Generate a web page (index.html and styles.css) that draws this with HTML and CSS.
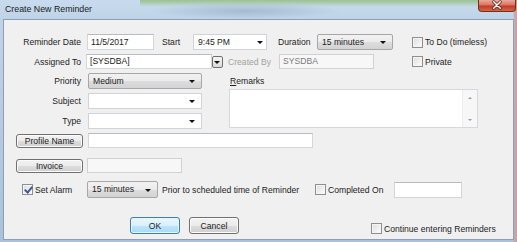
FILE: index.html
```html
<!DOCTYPE html>
<html lang="en">
<head>
    <meta charset="UTF-8">
    <title>Create New Reminder</title>
    <link rel="stylesheet" href="styles.css">
</head>
<body>
    <div class="window">
        <div class="titlebar">
            <span class="title">Create New Reminder</span>
            <span class="close">
                <svg width="38" height="12" viewBox="0 0 38 12">
                    <path d="M15.5 2.5 L22.5 9.5 M22.5 2.5 L15.5 9.5" stroke="#5a1c14" stroke-width="3" stroke-linecap="round"/>
                    <path d="M15.5 2.5 L22.5 9.5 M22.5 2.5 L15.5 9.5" stroke="#ffffff" stroke-width="1.6" stroke-linecap="round"/>
                </svg>
            </span>
        </div>

        <div class="client">
            <!-- date / start / duration -->
            <div class="row r1">
                <span class="lbl">Reminder Date</span>
                <span class="field date">11/5/2017</span>
                <span class="cap start">Start</span>
                <span class="combo plain time">9:45 PM<i class="arrow"></i></span>
                <span class="cap duration">Duration</span>
                <span class="combo dur">15 minutes<i class="arrow"></i></span>
                <span class="check todo"><i class="box"></i>To Do (timeless)</span>
            </div>

            <!-- assigned / created by -->
            <div class="row r2">
                <span class="lbl">Assigned To</span>
                <span class="field assigned">[SYSDBA]</span>
                <span class="dd-btn"><i class="arrow"></i></span>
                <span class="cap created">Created By</span>
                <span class="field off sysdba">SYSDBA</span>
                <span class="check private"><i class="box"></i>Private</span>
            </div>

            <div class="block">
                <div class="left-col">
                    <div class="row r-sel">
                        <span class="lbl">Priority</span>
                        <span class="combo sel">Medium<i class="arrow"></i></span>
                    </div>
                    <div class="row r-sel">
                        <span class="lbl">Subject</span>
                        <span class="combo plain sel"><i class="arrow"></i></span>
                    </div>
                    <div class="row r-sel">
                        <span class="lbl">Type</span>
                        <span class="combo plain sel"><i class="arrow"></i></span>
                    </div>
                </div>
                <div class="right-col">
                    <span class="remarks-lbl"><u>R</u>emarks</span>
                    <div class="memo">
                        <div class="scroll">
                            <i class="up"></i>
                            <i class="down"></i>
                        </div>
                    </div>
                </div>
            </div>

            <div class="row r6">
                <span class="btn side">Profile Name</span>
                <span class="field profile"></span>
            </div>

            <div class="row r7">
                <span class="btn side">Invoice</span>
                <span class="field off invoice"></span>
            </div>

            <div class="row r8">
                <span class="check alarm"><i class="box on"></i>Set Alarm</span>
                <span class="combo alarm-sel">15 minutes<i class="arrow"></i></span>
                <span class="cap prior">Prior to scheduled time of Reminder</span>
                <span class="check completed"><i class="box"></i>Completed On</span>
                <span class="field done"></span>
            </div>

            <div class="row r9">
                <span class="btn ok">OK</span>
                <span class="btn cancel">Cancel</span>
                <span class="check again"><i class="box"></i>Continue entering Reminders</span>
            </div>
        </div>
    </div>
</body>
</html>
```

FILE: styles.css
```css
* {
    box-sizing: border-box;
}

body {
    margin: 0;
    width: 517px;
    height: 242px;
    overflow: hidden;
    font-family: 'Liberation Sans', Arial, sans-serif;
    font-size: 8.6px;
    color: #1c1c1c;
}

.window {
    width: 517px;
    height: 242px;
    display: flex;
    flex-direction: column;
    background:
        radial-gradient(ellipse 95px 8px at 245px 11px, rgba(110, 135, 160, 0.35), rgba(110, 135, 160, 0) 100%),
        linear-gradient(180deg, rgba(140, 185, 110, 0.75) 0, rgba(140, 185, 110, 0) 7px) 140px 0 / 377px 20px no-repeat,
        linear-gradient(90deg, rgba(0, 0, 0, 0) 513px, #c7a3a6 515px),
        linear-gradient(180deg, #c8dbee 0, #bfd3e8 20px, #a9c2dc 100%);
}

.titlebar {
    height: 19px;
    display: flex;
    align-items: flex-start;
}

.title {
    margin: 3px 0 0 5px;
    font-size: 8.8px;
    line-height: 12px;
    color: #1a1a1a;
}

.close {
    margin-left: auto;
    margin-right: 1px;
    width: 38px;
    height: 12px;
    border: 1px solid #7b2c20;
    border-top: none;
    border-radius: 0 0 4px 4px;
    background: linear-gradient(180deg, #eaa99d 0%, #d9745f 45%, #c23c22 55%, #d2674a 100%);
    display: flex;
    justify-content: center;
}

.close svg {
    margin-top: -1px;
}

.client {
    margin-left: 3px;
    width: 511px;
    height: 221px;
    border: 1px solid #8c9fb3;
    background: #f0f0f0;
    padding-top: 14px;
}

.row {
    display: flex;
    align-items: center;
}

.lbl {
    width: 77px;
    flex: none;
    text-align: right;
}

.cap {
    flex: none;
    white-space: nowrap;
}

/* text boxes */
.field {
    flex: none;
    height: 16px;
    line-height: 14px;
    padding-left: 3px;
    background: #fff;
    border: 1px solid #d4d6d9;
    border-top-color: #b8bbc0;
}

.field.off {
    color: #7b7b7b;
    background: #f7f7f7;
    border-color: #cfd1d4;
}

/* combo boxes */
.combo {
    flex: none;
    position: relative;
    height: 16px;
    line-height: 14px;
    padding-left: 4px;
    border: 1px solid #a7a7a7;
    border-radius: 2px;
    background: linear-gradient(180deg, #f2f2f2 0%, #ebebeb 50%, #dddddd 51%, #d3d3d3 100%);
}

.combo.plain {
    background: #fff;
    border-color: #d0d3d7;
    border-radius: 0;
}

.arrow {
    position: absolute;
    right: 6px;
    top: 6px;
    width: 0;
    height: 0;
    border-left: 3px solid transparent;
    border-right: 3px solid transparent;
    border-top: 3px solid #111;
}

/* row 1 */
.r1 {
    height: 16px;
}

.date {
    margin-left: 6px;
    width: 67px;
}

.start {
    margin-left: 8px;
    width: 31px;
}

.time {
    width: 74px;
}

.time .arrow {
    right: 3px;
}

.duration {
    margin-left: 11px;
    width: 39px;
}

.dur {
    width: 76px;
}

/* check boxes */
.check {
    flex: none;
    display: flex;
    align-items: center;
    white-space: nowrap;
}

.box {
    width: 11px;
    height: 11px;
    margin-right: 2px;
    border: 1px solid #8e8f8f;
    background: linear-gradient(135deg, #dcdcdc 0%, #f4f4f4 70%, #ffffff 100%);
    box-shadow: inset 0 0 0 1px #f4f4f4;
    position: relative;
}

.box.on::after {
    content: "";
    position: absolute;
    left: 3px;
    top: 0;
    width: 3px;
    height: 6px;
    border-right: 2px solid #3d5a98;
    border-bottom: 2px solid #3d5a98;
    transform: rotate(40deg);
}

.todo {
    margin-left: 19px;
}

/* row 2 */
.r2 {
    height: 15px;
    margin-top: 4px;
}

.assigned {
    margin-left: 5px;
    width: 126px;
    height: 15px;
    line-height: 13px;
}

.dd-btn {
    flex: none;
    position: relative;
    width: 11px;
    height: 12px;
    border: 1px solid #6f6f6f;
    border-radius: 2px;
    background: linear-gradient(180deg, #f6f6f6, #dadada);
}

.dd-btn .arrow {
    right: 2px;
    top: 4px;
}

.created {
    margin-left: 5px;
    width: 51px;
    color: #a2a2a2;
}

.sysdba {
    width: 95px;
    height: 15px;
    line-height: 13px;
    background: #fff;
}

.private {
    margin-left: 38px;
}

/* priority / subject / type + remarks */
.block {
    display: flex;
    margin-top: 4px;
}

.left-col {
    display: flex;
    flex-direction: column;
    gap: 4px;
}

.r-sel {
    height: 16px;
}

.sel {
    margin-left: 7px;
    width: 114px;
}

.right-col {
    margin-left: 27px;
    display: flex;
    flex-direction: column;
}

.remarks-lbl {
    height: 16px;
    line-height: 16px;
    padding-left: 1px;
}

.memo {
    width: 249px;
    height: 39px;
    background: #fff;
    border: 1px solid #d6d8db;
    display: flex;
    justify-content: flex-end;
}

.scroll {
    width: 15px;
    background: #f7f7f7;
    border-left: 1px solid #ececec;
    display: flex;
    flex-direction: column;
    justify-content: space-between;
    align-items: center;
    padding: 7px 0 6px;
}

.up,
.down {
    width: 0;
    height: 0;
    border-left: 2px solid transparent;
    border-right: 2px solid transparent;
}

.up {
    border-bottom: 2px solid #9a9a9a;
}

.down {
    border-top: 2px solid #9a9a9a;
}

/* buttons */
.btn {
    flex: none;
    display: flex;
    align-items: center;
    justify-content: center;
    border: 1px solid #707070;
    border-radius: 3px;
    background: linear-gradient(180deg, #f2f2f2 0%, #ebebeb 50%, #dddddd 51%, #cfcfcf 100%);
    box-shadow: inset 0 0 0 1px #fbfbfb;
}

.side {
    margin-left: 12px;
    width: 67px;
    height: 14px;
}

.r6 {
    height: 15px;
    margin-top: 4px;
}

.profile {
    margin-left: 5px;
    width: 225px;
    height: 15px;
}

.r7 {
    height: 15px;
    margin-top: 10px;
}

.invoice {
    margin-left: 4px;
    width: 95px;
    height: 15px;
    background: #f0f0f0;
}

/* alarm row */
.r8 {
    height: 17px;
    margin-top: 8px;
}

.alarm {
    margin-left: 18px;
    width: 65px;
}

.alarm-sel {
    width: 71px;
    height: 17px;
    line-height: 15px;
}

.alarm-sel .arrow {
    top: 7px;
}

.prior {
    margin-left: 4px;
    width: 153px;
}

.completed {
    width: 79px;
}

.done {
    width: 68px;
}

/* bottom buttons */
.r9 {
    height: 17px;
    margin-top: 19px;
    align-items: flex-start;
}

.ok,
.cancel {
    width: 50px;
    height: 17px;
}

.ok {
    margin-left: 126px;
    border-color: #3c7fb1;
    background: linear-gradient(180deg, #eaf6fd 0%, #d9f0fc 50%, #bee6fd 51%, #a7d9f5 100%);
    box-shadow: inset 0 0 0 1px #e6f4fc;
}

.cancel {
    margin-left: 9px;
}

.again {
    margin-left: 132px;
    margin-top: 6px;
}
```
